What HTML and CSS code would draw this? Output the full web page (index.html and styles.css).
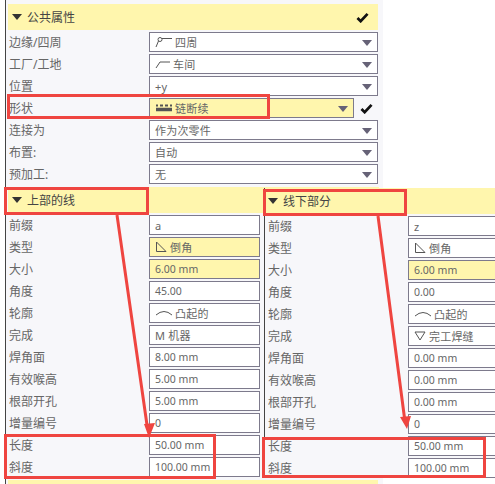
FILE: index.html
```html
<!DOCTYPE html>
<html lang="zh-CN">
<head>
  <meta charset="UTF-8">
  <meta name="viewport" content="width=device-width, initial-scale=1.0">
  <title>公共属性</title>
  <link rel="stylesheet" href="styles.css">
</head>
<body>
  <div class="sheet">
    <div class="group-head common-head">
      <span class="caret"></span><span class="head-text">公共属性</span>
      <svg class="tick" viewBox="0 0 14 12"><path d="M1.500 6.500 5 10 12.500 2" fill="none" stroke="#111" stroke-width="3"/></svg>
    </div>
    <div class="rows">
      <div class="row"><label>边缘/四周</label>
        <div class="field select"><svg class="ico" viewBox="0 0 18 12"><circle cx="5" cy="3.500" r="2" fill="none" stroke="#555"/><path d="M3.500 5 1 11M7 2.500h10" fill="none" stroke="#555"/></svg>四周</div></div>
      <div class="row"><label>工厂/工地</label>
        <div class="field select"><svg class="ico ico-short" viewBox="0 0 16 12"><path d="M1 10 5 4h10" fill="none" stroke="#555"/></svg>车间</div></div>
      <div class="row"><label>位置</label>
        <div class="field select">+y</div></div>
      <div class="row"><label>形状</label>
        <div class="field select changed short"><svg class="ico" viewBox="0 0 18 12"><path d="M1 7.500h16" stroke="#555" stroke-width="3.500" fill="none"/><path d="M1 3.500h2M5 3.500h3M10 3.500h3M15 3.500h2" stroke="#555" stroke-width="2" fill="none"/></svg>链断续</div>
        <svg class="tick tick-row" viewBox="0 0 14 12"><path d="M1.500 6.500 5 10 12.500 2" fill="none" stroke="#111" stroke-width="3"/></svg></div>
      <div class="row"><label>连接为</label>
        <div class="field select">作为次零件</div></div>
      <div class="row"><label>布置:</label>
        <div class="field select">自动</div></div>
      <div class="row"><label>预加工:</label>
        <div class="field select">无</div></div>
    </div>

    <div class="lines">
      <section class="line-panel upper">
        <div class="group-head"><span class="caret"></span><span class="head-text">上部的线</span></div>
        <div class="rows">
          <div class="row"><label>前缀</label><div class="field">a</div></div>
          <div class="row"><label>类型</label><div class="field changed"><svg class="ico ico-tri" viewBox="0 0 12 12"><path d="M1.500 1v9.500h9.500z" fill="none" stroke="#555"/></svg>倒角</div></div>
          <div class="row"><label>大小</label><div class="field num changed">6.00 mm</div></div>
          <div class="row"><label>角度</label><div class="field num">45.00</div></div>
          <div class="row"><label>轮廓</label><div class="field"><svg class="ico" viewBox="0 0 18 12"><path d="M1 8Q9 1 17 8" fill="none" stroke="#555"/></svg>凸起的</div></div>
          <div class="row"><label>完成</label><div class="field">M 机器</div></div>
          <div class="row"><label>焊角面</label><div class="field num">8.00 mm</div></div>
          <div class="row"><label>有效喉高</label><div class="field num">5.00 mm</div></div>
          <div class="row"><label>根部开孔</label><div class="field num">5.00 mm</div></div>
          <div class="row"><label>增量编号</label><div class="field num">0</div></div>
          <div class="row"><label>长度</label><div class="field num">50.00 mm</div></div>
          <div class="row"><label>斜度</label><div class="field num">100.00 mm</div></div>
        </div>
      </section>
      <section class="line-panel lower">
        <div class="group-head"><span class="caret"></span><span class="head-text">线下部分</span></div>
        <div class="rows">
          <div class="row"><label>前缀</label><div class="field">z</div></div>
          <div class="row"><label>类型</label><div class="field"><svg class="ico ico-tri" viewBox="0 0 12 12"><path d="M1.500 1v9.500h9.500z" fill="none" stroke="#555"/></svg>倒角</div></div>
          <div class="row"><label>大小</label><div class="field num changed">6.00 mm</div></div>
          <div class="row"><label>角度</label><div class="field num">0.00</div></div>
          <div class="row"><label>轮廓</label><div class="field"><svg class="ico" viewBox="0 0 18 12"><path d="M1 8Q9 1 17 8" fill="none" stroke="#555"/></svg>凸起的</div></div>
          <div class="row"><label>完成</label><div class="field"><svg class="ico ico-tri" viewBox="0 0 12 12"><path d="M1 2h10L6 10z" fill="none" stroke="#555"/></svg>完工焊缝</div></div>
          <div class="row"><label>焊角面</label><div class="field num">0.00 mm</div></div>
          <div class="row"><label>有效喉高</label><div class="field num">0.00 mm</div></div>
          <div class="row"><label>根部开孔</label><div class="field num">0.00 mm</div></div>
          <div class="row"><label>增量编号</label><div class="field num">0</div></div>
          <div class="row"><label>长度</label><div class="field num">50.00 mm</div></div>
          <div class="row"><label>斜度</label><div class="field num">100.00 mm</div></div>
        </div>
      </section>
    </div>
    <div class="next-head"></div>
  </div>

  <!-- 标注：红框和箭头 -->
  <div class="mark mark-shape"></div>
  <div class="mark mark-upper"></div>
  <div class="mark mark-lower"></div>
  <div class="mark mark-upper-len"></div>
  <div class="mark mark-lower-len"></div>
  <svg class="arrows" viewBox="0 0 495 484">
    <path d="M117 215 147 425M378 216 404.500 418" fill="none" stroke="#ef4540" stroke-width="3"/>
    <path d="M144 424 155 423 149 438zM400 417 411 416 407 429z" fill="#ef4540"/>
  </svg>
</body>
</html>
```

FILE: styles.css
```css
* {
  box-sizing: border-box;
}

html, body {
  margin: 0;
  height: 100%;
  overflow: hidden;
}

body {
  position: relative;
  background-color: white;
  font-family: "Noto Sans", "Noto Sans CJK SC", sans-serif;
  font-size: 12px;
  color: #666;
}

.sheet {
  width: 378px;
  height: 484px;
  margin-left: 5px;
  padding: 4px 5px 0 3px;
  background-color: #f7f7fa;
  border-left: 1px solid #444;
}

.group-head {
  display: flex;
  align-items: center;
  height: 26px;
  margin-left: -1px;
  padding-left: 4px;
  background-color: #fff6ad;
  color: #444;
  font-size: 12px;
}

.caret {
  width: 0;
  height: 0;
  margin-right: 5px;
  border-left: 5px solid transparent;
  border-right: 5px solid transparent;
  border-top: 6px solid #333;
}

.head-text {
  flex: 1;
}

.tick {
  width: 13px;
  height: 11px;
  margin-right: 9px;
}

.rows {
  display: flex;
  flex-direction: column;
  gap: 2px;
  padding-top: 2px;
}

.row {
  display: flex;
  align-items: center;
  height: 20px;
}

.row label {
  width: 140px;
  flex: none;
  white-space: nowrap;
}

.field {
  position: relative;
  display: flex;
  align-items: center;
  flex: 1;
  height: 20px;
  min-width: 0;
  padding-left: 5px;
  background-color: white;
  border: 1px solid #7d7a8c;
  font-size: 11px;
  letter-spacing: 0.2px;
  white-space: nowrap;
}

.num {
  font-size: 10.500px;
  letter-spacing: 0;
}

.changed {
  background-color: #fff6ad;
}

.select::after {
  content: "";
  position: absolute;
  right: 5px;
  top: 7px;
  border-left: 5px solid transparent;
  border-right: 5px solid transparent;
  border-top: 6px solid #666277;
}

.short {
  flex: none;
  width: 205px;
}

.tick-row {
  margin: 0 0 0 6px;
}

.ico {
  width: 18px;
  height: 12px;
  margin-right: 2px;
  flex: none;
}

.ico-short {
  width: 16px;
}

.ico-tri {
  width: 12px;
  margin-right: 3px;
}

.lines {
  position: relative;
  height: 293px;
  margin-top: 3px;
}

.line-panel {
  position: absolute;
  top: 0;
}

.upper {
  left: 0;
  width: 251px;
}

.upper .group-head {
  margin-right: -119px;
}

.lower {
  left: 255px;
  top: 1px;
  width: 240px;
  background-color: #f7f7fa;
  border-left: 1px solid #444;
}

.lower .group-head {
  margin-left: 0;
  padding-left: 3px;
}

.lower .row label {
  width: 143px;
  padding-left: 3px;
}

.next-head {
  height: 8px;
  margin-left: -1px;
  background-color: #fff6ad;
}

.mark {
  position: absolute;
  border: 3px solid #ef4540;
}

.mark-shape {
  left: 7px;
  top: 94px;
  width: 263px;
  height: 25px;
}

.mark-upper {
  left: 4px;
  top: 187px;
  width: 145px;
  height: 28px;
}

.mark-lower {
  left: 263px;
  top: 189px;
  width: 144px;
  height: 27px;
}

.mark-upper-len {
  left: 4px;
  top: 434px;
  width: 212px;
  height: 45px;
}

.mark-lower-len {
  left: 262px;
  top: 437px;
  width: 224px;
  height: 41px;
}

.arrows {
  position: absolute;
  left: 0;
  top: 0;
  width: 495px;
  height: 484px;
  pointer-events: none;
}
```
